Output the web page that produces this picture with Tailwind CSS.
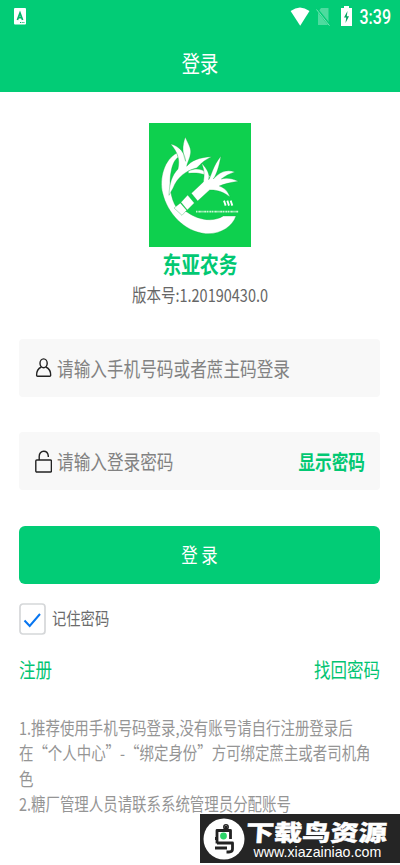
<!DOCTYPE html>
<html lang="zh-CN">
<head>
<meta charset="utf-8">
<title>登录</title>
<script src="https://cdn.jsdelivr.net/npm/@tailwindcss/browser@4"></script>
</head>
<body class="bg-white">
<main class="relative flex h-[865px] w-[400px] flex-col overflow-hidden bg-white font-['Noto_Sans_CJK_SC',sans-serif]">
  <header class="h-[92px] shrink-0 bg-[#02cc76] text-white">
    <div class="flex h-[33px] items-center pl-[14px] pr-[9px]">
      <svg class="h-[17px] w-[12px]" viewBox="0 0 12 17"><rect width="12" height="16.5" rx="1" fill="#fff"/><path d="M3.400 12 6 5l2.600 7M4.300 9.700h3.400" fill="none" stroke="#02b568" stroke-width="1.700"/><path d="M6 14.500h5" stroke="#02b568" stroke-dasharray="1 .7"/></svg>
      <svg class="ml-auto h-[20px] w-[20px]" viewBox="0 0 20 20"><path d="M.6 4Q10-3 19.500 4L10.200 18.800z" fill="#fff"/></svg>
      <svg class="ml-[6px] h-[20px] w-[15px]" viewBox="0 0 15 20"><path d="M5 1h7.500v17H2V5z" fill="#fff" opacity=".3"/><path d="M.7 2 14 18.500" stroke="#02cc76" stroke-width="2.500"/><path d="M.5 2.500 13.500 18.700" stroke="#fff" stroke-width="1" opacity=".45"/></svg>
      <svg class="ml-[10px] h-[21px] w-[11px]" viewBox="0 0 11 21"><path d="M3 0h5v2h3v18H0V2h3z" fill="#fff"/><path d="M6.500 5 3 11.500h2.200L4.500 17 8 10.200H5.800z" fill="#02a660"/></svg>
      <span class="mt-[2px] ml-[8px] inline-block origin-center scale-y-[1.22] font-[Roboto,sans-serif] text-[16px] leading-[20px] font-medium">3:39</span>
    </div>
    <h1 class="mt-[16px] text-center text-[18.3px] leading-[26px]"><span class="inline-block scale-y-[1.22]">登录</span></h1>
  </header>

  <section class="mt-[31px] flex flex-col items-center">
    <svg class="h-[124px] w-[102px]" viewBox="149 123 102 124">
      <rect x="149" y="123" width="102" height="124" fill="#0ed04e"/>
      <g transform="translate(155 132) scale(.3333)">
        <g fill="#fff" stroke="#0aa63a" stroke-width="1">
          <path d="M66 63C28 82 12 139 23 184C37 242 86 299 152 305C196 308 232 284 243 252H205C174 272 128 264 96 240L64 226C47 201 40 153 49 115C53 95 60 82 70 76z"/>
          <path d="M42 190C43 154 51 130 69 111C75 83 69 62 47 36C75 43 90 64 92 88C82 61 81 43 91 15C97 32 109 46 107 63C105 80 96 93 95 103C110 86 131 76 171 74C147 84 136 97 125 108C95 115 67 134 54 169z"/>
          <path d="M100 117C134 103 153 116 170 140C148 124 127 121 100 124z"/>
          <path d="M109 184 145 150C148 132 150 117 139 93C158 111 165 129 161 143C169 132 174 101 198 72C192 103 186 125 175 141C192 122 213 110 240 120C223 125 210 132 199 141C216 136 233 140 250 148C225 151 206 157 193 162C209 168 219 178 225 195C207 181 187 173 164 174L128 207z"/>
          <path d="M78 211 98 189 118 213 97 234zM57 228 76 213 95 235 81 250z"/>
        </g>
        <path d="m207 206 5 15m5-15 5 15m5-15 5 15" fill="none" stroke="#fff" stroke-width="5.500"/>
        <path d="M123 239h127" stroke="#c9f7d5" stroke-width="5" stroke-dasharray="4 1.500 2 1 6 1.500"/>
      </g>
    </svg>
    <h2 class="mt-[3px] text-[18.8px] leading-[26px] font-bold text-[#02c873]"><span class="inline-block scale-y-[1.22]">东亚农务</span></h2>
    <p class="mt-[7px] text-[14.5px] leading-[24px] text-[#666]"><span class="inline-block scale-y-[1.22]">版本号:1.20190430.0</span></p>
  </section>

  <form class="mt-[32px] pr-[20px] pl-[19px]">
    <div class="flex h-[58px] items-center rounded-[4px] bg-[#f8f8f8] pl-[16px]">
      <svg class="h-[20px] w-[17px]" viewBox="0 0 17 20" fill="none" stroke="#222" stroke-width="1.400"><ellipse cx="8.600" cy="5.300" rx="3.600" ry="4.400"/><path d="M6.300 9C3 10.500 1.500 13.500 1.600 17.300Q1.600 18.300 2.600 18.300H14.700Q15.700 18.300 15.700 17.300C15.800 13.500 14 10.500 10.900 9"/></svg>
      <span class="ml-[5px] inline-block scale-y-[1.22] text-[16.65px] leading-[24px] text-[#828282]">请输入手机号码或者蔗主码登录</span>
    </div>
    <div class="mt-[35px] flex h-[58px] items-center rounded-[4px] bg-[#f8f8f8] pr-[15px] pl-[16px]">
      <svg class="h-[23px] w-[17px]" viewBox="0 0 17 23" fill="none" stroke="#222" stroke-width="1.400"><rect x=".8" y="10" width="15.600" height="12" rx="1"/><path d="M4.200 10V6.500C4.200 3.500 6 1.300 8.700 1.300S13 3.200 13.300 5.800V7"/></svg>
      <span class="ml-[5px] inline-block scale-y-[1.22] text-[16.65px] leading-[24px] text-[#828282]">请输入登录密码</span>
      <span class="ml-auto inline-block scale-y-[1.22] text-[16.65px] leading-[24px] font-bold text-[#02c873]">显示密码</span>
    </div>
    <button type="button" class="mt-[36px] flex h-[58px] w-full items-center justify-center rounded-[6px] bg-[#02cc76] text-[16.4px] leading-[24px] text-white"><span class="mb-[2px] inline-block scale-y-[1.22]">登 录</span></button>
    <div class="mt-[19px] flex h-[32px] items-center">
      <svg class="h-[32px] w-[27px]" viewBox="0 0 27 32" fill="none"><rect x="1" y="1" width="25" height="30" rx="3" stroke="#d5d7d9" stroke-width="1.700"/><path d="M5.500 17.500 10.700 23 21 11" stroke="#0876f0" stroke-width="2"/></svg>
      <span class="mb-[2px] ml-[6px] inline-block scale-y-[1.22] text-[14.3px] leading-[20px] text-[#6b6b6b]">记住密码</span>
    </div>
    <div class="mt-[21px] flex justify-between text-[16.5px] leading-[26px] text-[#02c472]">
      <span class="inline-block scale-y-[1.22]">注册</span>
      <span class="inline-block scale-y-[1.22]">找回密码</span>
    </div>
  </form>

  <div class="mt-[33px] ml-[19px] h-[84px] origin-top scale-y-[1.22] text-[14.45px] leading-[20.9px] whitespace-nowrap text-[#959595]">
    <p>1.推荐使用手机号码登录,没有账号请自行注册登录后</p>
    <p>在“个人中心”-“绑定身份”方可绑定蔗主或者司机角</p>
    <p>色</p>
    <p>2.糖厂管理人员请联系系统管理员分配账号</p>
  </div>

  <aside class="absolute top-[814px] left-[200px] flex h-[49px] w-[200px] items-center bg-[#252525] pl-[3px] text-white">
    <svg class="h-[42px] w-[42px] shrink-0" viewBox="0 0 42 42" fill="none"><circle cx="21" cy="21" r="20.500" fill="#fff"/><path d="M23 8v4.500M14 25.500V12.500H27.500V21M12 20.500H14M14 25H29.500V31Q29.500 34 26 34H23.500M12 30H24" stroke="#222" stroke-width="2.800" stroke-linejoin="round"/><circle cx="23" cy="9" r="2.200" stroke="#222" stroke-width="1.500"/><circle cx="20.500" cy="18" r="3.400" fill="#2bd467"/></svg>
    <div class="flex w-[150px] flex-col pt-[2px] pl-[1px]">
      <strong class="inline-block h-[25px] origin-left -skew-x-3 scale-x-[1.25] text-[22.6px] leading-[25px] font-black whitespace-nowrap [-webkit-text-stroke:0.4px_white]">下载鸟资源</strong>
      <span class="ml-[7.500px] h-[17px] font-['Liberation_Sans',sans-serif] text-[14.2px] leading-[17px] whitespace-nowrap">www.xiazainiao.com</span>
    </div>
  </aside>
</main>
</body>
</html>
